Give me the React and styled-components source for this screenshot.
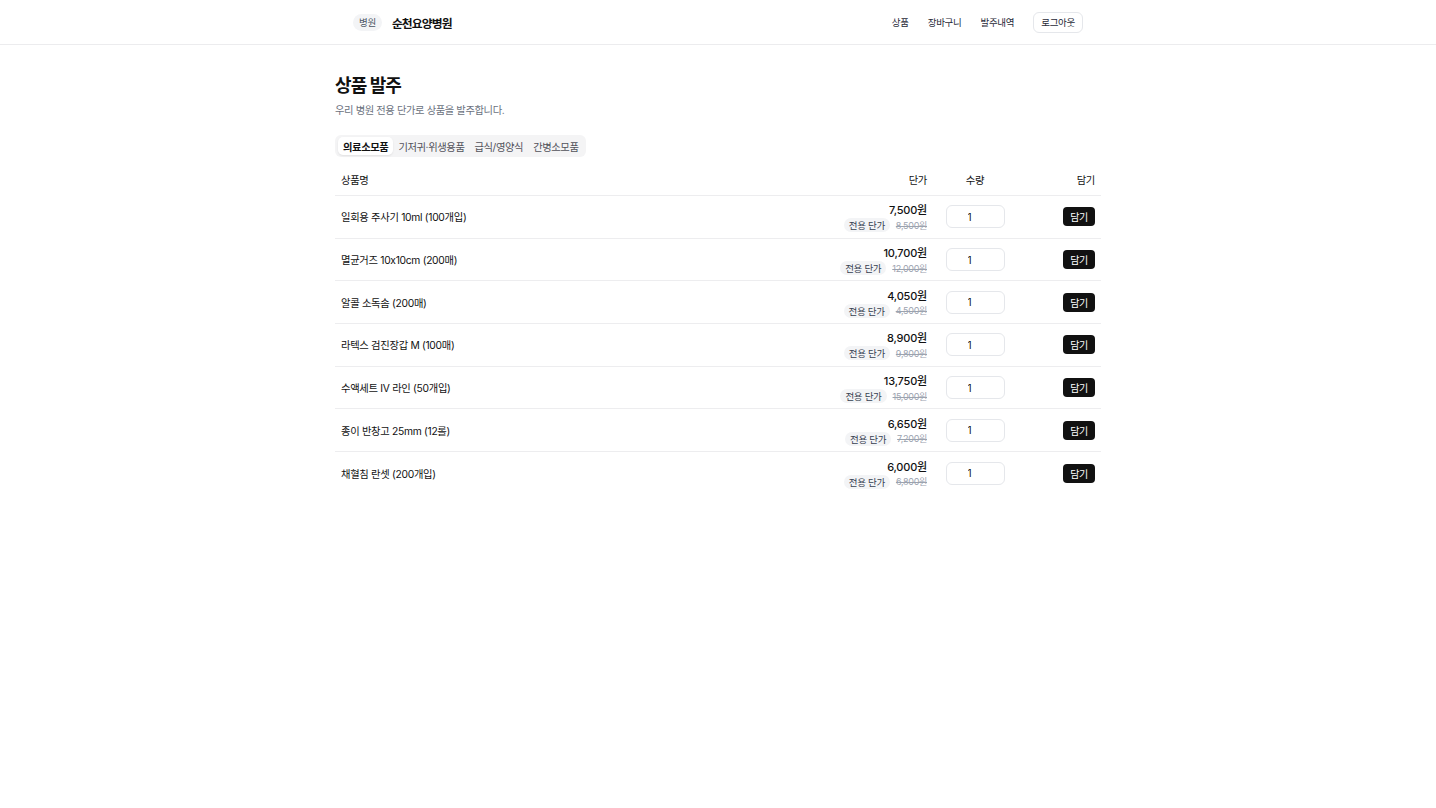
import React, { useState } from "react";
import styled, { createGlobalStyle } from "styled-components";

const Global = createGlobalStyle`
  * { box-sizing: border-box; }
  body {
    margin: 0;
    background: #fff;
    color: #111827;
    font-family: "Inter", "Noto Sans CJK KR", sans-serif;
  }
`;

const Header = styled.header`
  height: 45px;
  border-bottom: 1px solid #ececee;
  background: #fff;
`;

const HeaderInner = styled.div`
  max-width: 762px;
  height: 100%;
  margin: 0 auto;
  padding: 0 16px;
  display: flex;
  align-items: center;
  justify-content: space-between;
`;

const Brand = styled.div`
  display: flex;
  align-items: center;
  gap: 10px;
`;

const Pill = styled.span`
  display: inline-flex;
  align-items: center;
  height: 17px;
  padding: 0 6px;
  border-radius: 999px;
  background: #f3f4f6;
  color: #4b5563;
  font-size: 9.5px;
  letter-spacing: -0.3px;
`;

const BrandName = styled.span`
  font-size: 11.8px;
  font-weight: 600;
  letter-spacing: -0.9px;
  color: #111;
`;

const Nav = styled.nav`
  display: flex;
  align-items: center;
  gap: 19px;
`;

const NavLink = styled.a`
  font-size: 9.5px;
  color: #1f2937;
  letter-spacing: -0.3px;
  cursor: pointer;
`;

const OutlineButton = styled.button`
  height: 21px;
  padding: 0 7px;
  border: 1px solid #e5e7eb;
  border-radius: 6px;
  background: #fff;
  font: inherit;
  font-size: 9.5px;
  letter-spacing: -0.3px;
  color: #1f2937;
`;

const Main = styled.main`
  max-width: 766px;
  margin: 0 auto;
  padding-top: 30px;
`;

const Title = styled.h1`
  margin: 0;
  font-size: 18px;
  font-weight: 700;
  letter-spacing: -0.9px;
  line-height: 22px;
  color: #111;
`;

const Subtitle = styled.p`
  margin: 5px 0 0;
  font-size: 10.3px;
  letter-spacing: -0.4px;
  color: #6b7280;
`;

const Tabs = styled.div`
  margin-top: 18px;
  display: inline-flex;
  padding: 2px 2px 2px 3px;
  border-radius: 6px;
  background: #f4f4f5;
`;

const Tab = styled.button`
  height: 18px;
  padding: 0 5px;
  border: none;
  border-radius: 5px;
  font: inherit;
  font-size: 10.3px;
  letter-spacing: -0.4px;
  background: ${(p) => (p.$active ? "#fff" : "transparent")};
  color: ${(p) => (p.$active ? "#111" : "#52525b")};
  font-weight: ${(p) => (p.$active ? 600 : 400)};
  box-shadow: ${(p) => (p.$active ? "0 1px 2px rgba(0,0,0,0.08)" : "none")};
`;

const Table = styled.div`
  margin-top: 7px;
`;

const Row = styled.div`
  display: grid;
  grid-template-columns: 1fr 140px 84px 84px;
  align-items: center;
  height: ${(p) => (p.$head ? "32px" : "42.7px")};
  border-bottom: ${(p) => (p.$last ? "none" : "1px solid #ededef")};
`;

const Cell = styled.div`
  padding: 0 6px;
  font-size: 10.3px;
  letter-spacing: -0.3px;
  color: #111;
  display: flex;
  justify-content: ${(p) =>
    p.$align === "right" ? "flex-end" : p.$align === "center" ? "center" : "flex-start"};
`;

const PriceBox = styled.div`
  display: flex;
  flex-direction: column;
  align-items: flex-end;
  gap: 1px;
`;

const Price = styled.span`
  font-size: 11px;
  font-weight: 500;
  letter-spacing: -0.2px;
  color: #111;
`;

const PriceSub = styled.div`
  display: flex;
  align-items: center;
  gap: 6px;
`;

const Special = styled.span`
  display: inline-flex;
  align-items: center;
  height: 14px;
  padding: 0 5px;
  border-radius: 999px;
  background: #f3f4f6;
  color: #374151;
  font-size: 9.5px;
  letter-spacing: -0.3px;
`;

const Original = styled.span`
  font-size: 9px;
  color: #9ca3af;
  text-decoration: line-through;
  letter-spacing: -0.3px;
`;

const QtyInput = styled.input`
  width: 59px;
  height: 23px;
  border: 1px solid #e5e7eb;
  border-radius: 6px;
  padding: 0 0 0 21px;
  font: inherit;
  font-size: 10px;
  color: #111;
  background: #fff;
  outline: none;
`;

const AddButton = styled.button`
  height: 19px;
  padding: 0 7px;
  border: none;
  border-radius: 4px;
  background: #111;
  color: #fff;
  font: inherit;
  font-size: 10px;
  letter-spacing: -0.3px;
`;

const products = [
  { name: "일회용 주사기 10ml (100개입)", price: "7,500원", orig: "8,500원" },
  { name: "멸균거즈 10x10cm (200매)", price: "10,700원", orig: "12,000원" },
  { name: "알콜 소독솜 (200매)", price: "4,050원", orig: "4,500원" },
  { name: "라텍스 검진장갑 M (100매)", price: "8,900원", orig: "9,800원" },
  { name: "수액세트 IV 라인 (50개입)", price: "13,750원", orig: "15,000원" },
  { name: "종이 반창고 25mm (12롤)", price: "6,650원", orig: "7,200원" },
  { name: "채혈침 란셋 (200개입)", price: "6,000원", orig: "6,800원" },
];

const tabs = ["의료소모품", "기저귀·위생용품", "급식/영양식", "간병소모품"];

export default function App() {
  const [active, setActive] = useState(0);
  return (
    <>
      <Global />
      <Header>
        <HeaderInner>
          <Brand>
            <Pill>병원</Pill>
            <BrandName>순천요양병원</BrandName>
          </Brand>
          <Nav>
            <NavLink>상품</NavLink>
            <NavLink>장바구니</NavLink>
            <NavLink>발주내역</NavLink>
            <OutlineButton>로그아웃</OutlineButton>
          </Nav>
        </HeaderInner>
      </Header>
      <Main>
        <Title>상품 발주</Title>
        <Subtitle>우리 병원 전용 단가로 상품을 발주합니다.</Subtitle>
        <Tabs>
          {tabs.map((t, i) => (
            <Tab key={t} $active={i === active} onClick={() => setActive(i)}>
              {t}
            </Tab>
          ))}
        </Tabs>
        <Table>
          <Row $head>
            <Cell>상품명</Cell>
            <Cell $align="right">단가</Cell>
            <Cell $align="center">수량</Cell>
            <Cell $align="right">담기</Cell>
          </Row>
          {products.map((p, i) => (
            <Row key={p.name} $last={i === products.length - 1}>
              <Cell>{p.name}</Cell>
              <Cell $align="right">
                <PriceBox>
                  <Price>{p.price}</Price>
                  <PriceSub>
                    <Special>전용 단가</Special>
                    <Original>{p.orig}</Original>
                  </PriceSub>
                </PriceBox>
              </Cell>
              <Cell $align="center">
                <QtyInput defaultValue="1" />
              </Cell>
              <Cell $align="right">
                <AddButton>담기</AddButton>
              </Cell>
            </Row>
          ))}
        </Table>
      </Main>
    </>
  );
}
